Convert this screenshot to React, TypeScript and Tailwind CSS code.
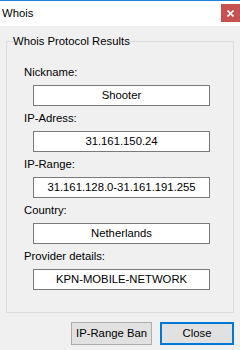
import React from "react"

const fields = [
  { label: "Nickname:", value: "Shooter" },
  { label: "IP-Adress:", value: "31.161.150.24" },
  { label: "IP-Range:", value: "31.161.128.0-31.161.191.255" },
  { label: "Country:", value: "Netherlands" },
  { label: "Provider details:", value: "KPN-MOBILE-NETWORK" },
]

export default function App() {
  return (
    <div
      className="w-[240px] h-[350px] flex flex-col bg-[#f0f0f0] text-[11.3px] leading-[15px] text-black overflow-hidden"
      style={{ fontFamily: '"Liberation Sans", Arial, sans-serif' }}
    >
      {/* title bar */}
      <div className="h-[26px] border-t border-[#1883d7] bg-white flex items-start justify-between">
        <span className="pl-[2px] pt-[5px]">Whois</span>
        <div className="mt-[3px] w-[19px] h-[18px] bg-[#c75050] flex items-center justify-center">
          <svg width="7" height="7" viewBox="0 0 7 7" className="text-white">
            <path d="M0.5 0.5 L6.5 6.5 M6.5 0.5 L0.5 6.5" stroke="currentColor" strokeWidth="1.6" />
          </svg>
        </div>
      </div>

      <div className="flex flex-col px-[6px] pt-[8px]">
        <fieldset className="border border-[#dcdcdc] w-[228px] pb-[22px]">
          <legend className="ml-[6px] px-0">Whois Protocol Results</legend>
          <div className="flex flex-col gap-[5px] pt-[16px] pl-[17px]">
            {fields.map((f) => (
              <div key={f.label} className="flex flex-col gap-[5px]">
                <span>{f.label}</span>
                <div className="ml-[9px] w-[177px] h-[21px] border border-[#7a7a7a] bg-white flex items-center justify-center">
                  {f.value}
                </div>
              </div>
            ))}
          </div>
        </fieldset>

        <div className="flex justify-end gap-[8px] mt-[9px]">
          <button className="w-[81px] h-[23px] border border-[#adadad] bg-[#e1e1e1]">IP-Range Ban</button>
          <button className="w-[74px] h-[23px] border-2 border-[#0078d7] bg-[#e1e1e1]">Close</button>
        </div>
      </div>
    </div>
  )
}
